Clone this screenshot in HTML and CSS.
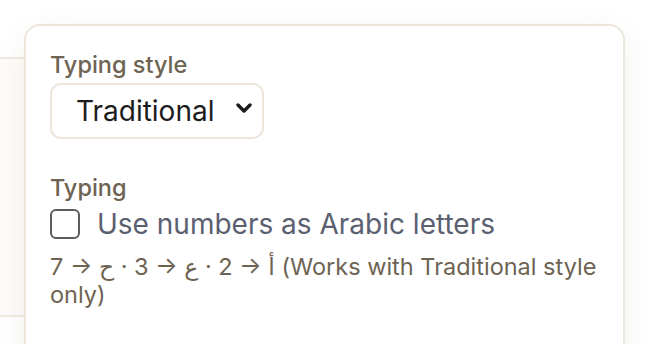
FILE: index.html
```html
<!DOCTYPE html>
<html>
<head>
  <title>Settings</title>
  <meta name="viewport" content="width=device-width, initial-scale=1.0">
  <link rel="stylesheet" href="styles.css">
</head>
<body>

  <div class="page">
    <div class="under-panel"></div>

    <div class="popover">
      <div class="field">
        <label class="field-label" for="styleSelect">Typing style</label>
        <div class="select-box">
          <select id="styleSelect">
            <option>Traditional</option>
            <option>Phonetic</option>
          </select>
          <svg class="chevron" width="16" height="16" viewBox="0 0 16 16">
            <path d="M2 5 L8 11 L14 5" fill="none" stroke="#1c1c1c" stroke-width="3.4" stroke-linecap="round" stroke-linejoin="round"/>
          </svg>
        </div>
      </div>

      <div class="field">
        <div class="field-label">Typing</div>
        <label class="check-row">
          <span class="check-box"></span>
          <span class="check-text">Use numbers as Arabic letters</span>
        </label>
        <div class="hint">7 → ح&lrm; · 3 → ع&lrm; · 2 → أ&lrm; (Works with Traditional style only)</div>
      </div>
    </div>
  </div>

</body>
</html>
```

FILE: styles.css
```css
* {
  margin: 0;
  padding: 0;
  box-sizing: border-box;
}

html, body {
  height: 100%;
  font-family: Inter, "Noto Sans", "DejaVu Sans", sans-serif;
  background: #ffffff;
  overflow: hidden;
}

.page {
  position: relative;
  height: 100%;
  padding-top: 57px;
}

.under-panel {
  width: 60px;
  height: 260px;
  background: #fdfcf9;
  border-top: 2px solid #efe9e0;
  border-bottom: 2px solid #efe9e0;
}

.popover {
  position: absolute;
  top: 24px;
  left: 24px;
  width: 601px;
  height: 360px;
  background: #ffffff;
  border: 2px solid #ece6dc;
  border-radius: 16px;
  box-shadow: 0 10px 30px rgba(60, 50, 30, 0.07);
  padding: 25px 24px 0;
  display: flex;
  flex-direction: column;
  gap: 35px;
}

.field {
  display: flex;
  flex-direction: column;
  align-items: flex-start;
}

.field-label {
  font-size: 23.5px;
  font-weight: 500;
  color: #6e6353;
  line-height: 28px;
}

.select-box {
  position: relative;
  margin-top: 4px;
  width: 214px;
  height: 56px;
  border: 2px solid #ece6dc;
  border-radius: 11px;
}

.select-box select {
  appearance: none;
  -webkit-appearance: none;
  width: 100%;
  height: 100%;
  border: none;
  background: transparent;
  outline: none;
  font-family: inherit;
  font-size: 28px;
  color: #1c1c1c;
  padding: 0 40px 0 24px;
}

.chevron {
  position: absolute;
  right: 10px;
  top: 15px;
  pointer-events: none;
}

.check-row {
  display: flex;
  align-items: center;
  gap: 17px;
  margin-top: 5px;
  height: 34px;
}

.check-box {
  width: 30px;
  height: 30px;
  border: 2px solid #5c5c5c;
  border-radius: 6px;
}

.check-text {
  font-size: 28px;
  line-height: 34px;
  color: #5b6070;
}

.hint {
  margin-top: 12px;
  font-size: 23.5px;
  line-height: 28px;
  color: #6e6353;
}
```
